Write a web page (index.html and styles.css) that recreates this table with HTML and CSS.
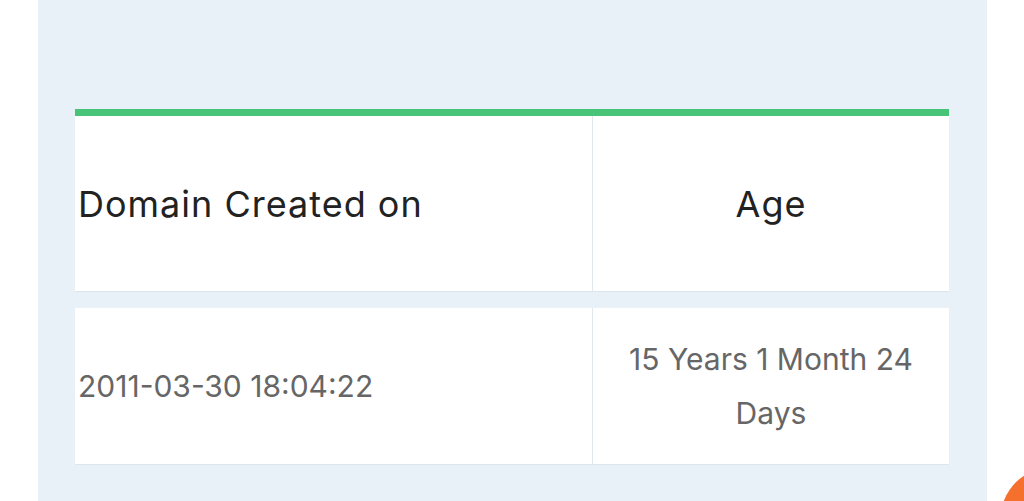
FILE: index.html
```html
<!DOCTYPE html>
<html>
  <head>
    <meta charset="UTF-8" />
    <title>Domain Age</title>
    <link rel="stylesheet" href="styles.css">
  </head>
  <body>
    <div class="panel">
      <div class="age-table">
        <div class="row head-row">
          <div class="cell cell-left">Domain Created on</div>
          <div class="cell cell-right">Age</div>
        </div>
        <div class="row data-row">
          <div class="cell cell-left">2011-03-30 18:04:22</div>
          <div class="cell cell-right">15 Years 1 Month 24 Days</div>
        </div>
      </div>
    </div>
    <div class="chat-bubble"></div>
  </body>
</html>
```

FILE: styles.css
```css
body {
  margin: 0;
  height: 501px;
  overflow: hidden;
  background-color: #fff;
  font-family: Inter, "Open Sans", sans-serif;
}

.panel {
  margin-left: 38px;
  width: 949px;
  height: 501px;
  box-sizing: border-box;
  padding: 109px 38px 0 37px;
  background-color: #e8f0f8;
}

.age-table {
  display: flex;
  flex-direction: column;
  gap: 15px;
}

.row {
  display: grid;
  grid-template-columns: 518px 1fr;
  background-color: #fff;
  border-bottom: 1px solid #dde5ed;
}

.head-row {
  border-top: 7px solid #48c479;
  height: 183px;
  box-sizing: border-box;
  color: #222;
  font-size: 36px;
  letter-spacing: 1px;
}

.data-row {
  height: 158px;
  box-sizing: border-box;
  border-top: 1px solid #edf2f7;
  color: #666;
  font-size: 30px;
  line-height: 54px;
}

.cell {
  display: flex;
  align-items: center;
}

.cell-left {
  padding-left: 3px;
  border-right: 1px solid #dfe7ef;
}

.cell-right {
  justify-content: center;
  text-align: center;
  padding: 0 30px;
}

.chat-bubble {
  position: absolute;
  left: 1000px;
  top: 466px;
  width: 110px;
  height: 110px;
  border-radius: 50%;
  background-color: #f4702c;
}
```
